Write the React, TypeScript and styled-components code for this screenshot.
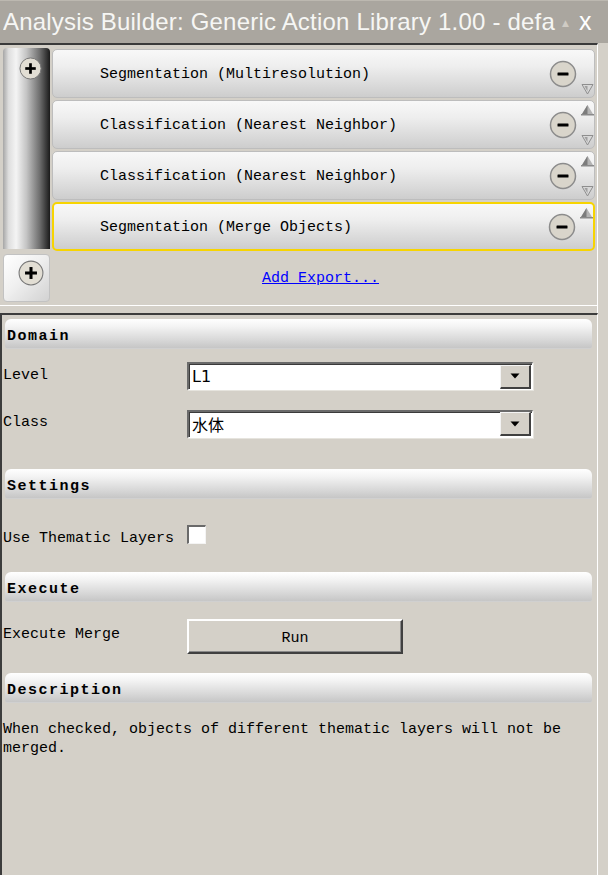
import React from "react";
import styled, { createGlobalStyle, css } from "styled-components";

const Global = createGlobalStyle`
  html, body { margin: 0; padding: 0; background: #d4d0c8; }
  body { width: 608px; height: 875px; overflow: hidden; }
  * { box-sizing: border-box; }
`;

const MONO = `"Liberation Mono", "Noto Sans CJK SC", monospace`;

const Window = styled.div`
  width: 608px;
  height: 875px;
  display: flex;
  flex-direction: column;
  background: #d4d0c8;
`;

const TitleBar = styled.div`
  height: 43px;
  flex: none;
  display: flex;
  align-items: center;
  background: #aaa69f;
  padding-left: 3px;
  border-top: 1px solid #bcb8b0;
`;

const TitleText = styled.div`
  flex: 1;
  overflow: hidden;
  white-space: nowrap;
  font-family: "Liberation Sans", Arial, sans-serif;
  font-size: 24px;
  letter-spacing: 0.2px;
  color: #f6f6f4;
  line-height: 40px;
`;

const TitleControls = styled.div`
  width: 52px;
  display: flex;
  align-items: center;
  gap: 10px;
  padding-left: 6px;
`;

const TitleArrow = styled.span`
  font-size: 9px;
  color: #cfcbc4;
  font-family: "DejaVu Sans", sans-serif;
  margin-top: 2px;
`;

const TitleClose = styled.span`
  font-family: "Liberation Sans", sans-serif;
  font-size: 25px;
  color: #ffffff;
  line-height: 24px;
  margin-top: -3px;
`;

const Body = styled.div`
  flex: 1;
  display: flex;
  flex-direction: column;
  width: 598px;
`;

const TopPanel = styled.div`
  flex: none;
  height: 263px;
  border-top: 2px solid #3a3a3a;
  border-right: 1px solid #ffffff;
  border-bottom: 1px solid #ffffff;
  padding: 3px 2px 3px 3px;
  display: grid;
  grid-template-columns: 47px 1fr;
  column-gap: 2px;
`;

const LeftColumn = styled.div`
  display: flex;
  flex-direction: column;
  gap: 5px;
`;

const SideBar = styled.div`
  height: 201px;
  border-radius: 4px 4px 0 0;
  background: linear-gradient(
    to right,
    #a6a6a6 0%,
    #dedede 12%,
    #f4f4f4 28%,
    #c4c4c4 50%,
    #6e6e6e 78%,
    #1a1a1a 100%
  );
  display: flex;
  justify-content: center;
  padding: 9px 0 0 8px;
`;

const SideButton = styled.div`
  height: 48px;
  border: 1px solid #c2c2c2;
  border-radius: 4px;
  background: linear-gradient(135deg, #ffffff 0%, #f0f0f0 45%, #d2d2d2 100%);
  display: flex;
  justify-content: center;
  padding: 5px 0 0 8px;
`;

const RowsColumn = styled.div`
  display: flex;
  flex-direction: column;
  gap: 2px;
  padding-top: 1px;
`;

const ActionRow = styled.div<{ $selected?: boolean }>`
  height: 49px;
  display: flex;
  align-items: center;
  border-radius: 5px;
  background: linear-gradient(to bottom, #f8f8f8 0%, #eeeeee 35%, #cdcdcd 100%);
  border: 1px solid #bdbdbd;
  padding-left: 47px;
  ${(p) =>
    p.$selected &&
    css`
      border: 2px solid #f7d400;
      padding-left: 46px;
    `}
`;

const ActionLabel = styled.div`
  flex: 1;
  font-family: ${MONO};
  font-size: 15px;
  color: #000;
  white-space: pre;
  padding-top: 2px;
`;

const RowControls = styled.div`
  display: flex;
  align-items: center;
  height: 100%;
  gap: 4px;
`;

const ArrowColumn = styled.div`
  height: 100%;
  width: 13px;
  display: flex;
  flex-direction: column;
  justify-content: space-between;
  padding: 1px 0 4px;
`;

const ArrowSlot = styled.div`
  width: 13px;
  height: 12px;
`;

const ExportRow = styled.div`
  flex: 1;
  display: flex;
  align-items: center;
  justify-content: center;
  padding-right: 6px;
  padding-top: 1px;
`;

const ExportLink = styled.a`
  font-family: ${MONO};
  font-size: 15px;
  color: #0000ff;
  text-decoration: underline;
  cursor: pointer;
`;

const Gutter = styled.div`
  height: 7px;
  flex: none;
  border-right: 1px solid #ffffff;
`;

const LowerPanel = styled.div`
  flex: 1;
  border-top: 2px solid #3c3c3c;
  border-left: 2px solid #3c3c3c;
  border-right: 1px solid #ffffff;
  padding: 4px 5px 0 0;
  display: flex;
  flex-direction: column;
`;

const SectionHeader = styled.div<{ $gap: number }>`
  height: 30px;
  margin: ${(p) => p.$gap}px 0 0 3px;
  border-radius: 6px 6px 3px 3px;
  background: linear-gradient(to bottom, #ffffff 0%, #f4f4f4 25%, #d6d6d6 75%, #c6c6c6 100%);
  border-bottom: 1px solid #d0d0d0;
  display: flex;
  align-items: center;
  padding: 5px 0 0 2px;
  font-family: ${MONO};
  font-weight: bold;
  font-size: 15px;
  letter-spacing: 1.5px;
  color: #000;
`;

const FieldRow = styled.div<{ $gap: number; $height: number }>`
  margin-top: ${(p) => p.$gap}px;
  height: ${(p) => p.$height}px;
  display: grid;
  grid-template-columns: 185px auto;
  align-items: center;
`;

const FieldLabel = styled.div<{ $shift: number }>`
  padding-left: 1px;
  font-family: ${MONO};
  font-size: 15px;
  line-height: 18px;
  color: #000;
  white-space: pre;
  transform: translateY(${(p) => p.$shift}px);
`;

const Combo = styled.div`
  width: 346px;
  height: 28px;
  display: flex;
  align-items: center;
  background: #ffffff;
  border-top: 2px solid #6a6a6a;
  border-left: 2px solid #6a6a6a;
  border-bottom: 1px solid #ffffff;
  border-right: 1px solid #ffffff;
  box-shadow: inset 1px 1px 0 #3a3a3a, 1px 1px 0 #e6e4de;
  padding: 0 1px 0 3px;
`;

const ComboText = styled.div`
  flex: 1;
  font-family: "DejaVu Sans", "Noto Sans CJK SC", sans-serif;
  font-size: 16px;
  color: #000;
`;

const ComboButton = styled.div`
  width: 31px;
  height: 24px;
  background: #d4d0c8;
  border-top: 1px solid #f4f4f4;
  border-left: 1px solid #f4f4f4;
  border-right: 2px solid #404040;
  border-bottom: 2px solid #404040;
  display: flex;
  align-items: center;
  justify-content: center;
`;

const CheckBox = styled.div`
  width: 19px;
  height: 19px;
  background: #ffffff;
  border-top: 2px solid #6a6a6a;
  border-left: 2px solid #6a6a6a;
  border-right: 1px solid #f4f4f4;
  border-bottom: 1px solid #f4f4f4;
`;

const RunButton = styled.button`
  width: 216px;
  height: 35px;
  background: #d4d0c8;
  border-top: 2px solid #ffffff;
  border-left: 2px solid #ffffff;
  border-right: 2px solid #404040;
  border-bottom: 2px solid #404040;
  box-shadow: inset -1px -1px 0 #8a8a8a;
  font-family: ${MONO};
  font-size: 15px;
  color: #000;
  padding: 3px 0 0;
`;

const Description = styled.div`
  margin-top: 17px;
  padding-left: 1px;
  font-family: ${MONO};
  font-size: 15px;
  line-height: 19px;
  color: #000;
  width: 590px;
`;

const PlusCircle = ({ size = 24 }: { size?: number }) => (
  <svg width={size} height={size} viewBox="0 0 24 24">
    <circle cx="12" cy="12" r="11" fill="#e2ded4" stroke="#777" strokeWidth="1" />
    <rect x="6.5" y="10.6" width="11" height="2.8" fill="#000" />
    <rect x="10.6" y="6.5" width="2.8" height="11" fill="#000" />
  </svg>
);

const MinusCircle = () => (
  <svg width="28" height="28" viewBox="0 0 28 28">
    <circle cx="14" cy="14" r="12.5" fill="#d9d5cb" stroke="#8c8c8c" strokeWidth="1.5" />
    <rect x="8.5" y="12.4" width="11" height="3.2" rx="0.5" fill="#000" />
  </svg>
);

const UpArrow = () => (
  <svg width="13" height="12" viewBox="0 0 13 12">
    <polygon points="6.5,1 12,10 1,10" fill="#b4b4b4" />
    <polygon points="6.5,1 6.5,10 1,10" fill="#7c7c7c" />
    <rect x="0" y="10" width="13" height="1.5" fill="#8a8a8a" />
  </svg>
);

const DownArrow = () => (
  <svg width="13" height="12" viewBox="0 0 13 12">
    <polygon points="1,1.5 12,1.5 6.5,11" fill="#d8d8d8" stroke="#8e8e8e" strokeWidth="1" />
    <polygon points="3.5,3 6.5,3 6.5,8.5" fill="#a0a0a0" />
  </svg>
);

const ComboArrow = () => (
  <svg width="10" height="6" viewBox="0 0 10 6">
    <polygon points="0.5,0.5 9.5,0.5 5,5.5" fill="#000" />
  </svg>
);

type Action = { name: string; up: boolean; down: boolean; selected?: boolean };

const actions: Action[] = [
  { name: "Segmentation (Multiresolution)", up: false, down: true },
  { name: "Classification (Nearest Neighbor)", up: true, down: true },
  { name: "Classification (Nearest Neighbor)", up: true, down: true },
  { name: "Segmentation (Merge Objects)", up: true, down: false, selected: true },
];

export default function App() {
  return (
    <>
      <Global />
      <Window>
        <TitleBar>
          <TitleText>Analysis Builder: Generic Action Library 1.00 - default</TitleText>
          <TitleControls>
            <TitleArrow>▲</TitleArrow>
            <TitleClose>x</TitleClose>
          </TitleControls>
        </TitleBar>
        <Body>
          <TopPanel>
            <LeftColumn>
              <SideBar>
                <PlusCircle size={23} />
              </SideBar>
              <SideButton>
                <PlusCircle size={26} />
              </SideButton>
            </LeftColumn>
            <RowsColumn>
              {actions.map((a, i) => (
                <ActionRow key={i} $selected={a.selected}>
                  <ActionLabel>{a.name}</ActionLabel>
                  <RowControls>
                    <MinusCircle />
                    <ArrowColumn>
                      <ArrowSlot>{a.up && <UpArrow />}</ArrowSlot>
                      <ArrowSlot>{a.down && <DownArrow />}</ArrowSlot>
                    </ArrowColumn>
                  </RowControls>
                </ActionRow>
              ))}
              <ExportRow>
                <ExportLink>Add Export...</ExportLink>
              </ExportRow>
            </RowsColumn>
          </TopPanel>
          <Gutter />
          <LowerPanel>
            <SectionHeader $gap={0}>Domain</SectionHeader>
            <FieldRow $gap={13} $height={28}>
              <FieldLabel $shift={0}>Level</FieldLabel>
              <Combo>
                <ComboText>L1</ComboText>
                <ComboButton>
                  <ComboArrow />
                </ComboButton>
              </Combo>
            </FieldRow>
            <FieldRow $gap={19} $height={29}>
              <FieldLabel $shift={-1}>Class</FieldLabel>
              <Combo>
                <ComboText>水体</ComboText>
                <ComboButton>
                  <ComboArrow />
                </ComboButton>
              </Combo>
            </FieldRow>
            <SectionHeader $gap={31}>Settings</SectionHeader>
            <FieldRow $gap={26} $height={19}>
              <FieldLabel $shift={4}>Use Thematic Layers</FieldLabel>
              <CheckBox />
            </FieldRow>
            <SectionHeader $gap={28}>Execute</SectionHeader>
            <FieldRow $gap={17} $height={35}>
              <FieldLabel $shift={-2}>Execute Merge</FieldLabel>
              <RunButton>Run</RunButton>
            </FieldRow>
            <SectionHeader $gap={19}>Description</SectionHeader>
            <Description>
              When checked, objects of different thematic layers will not be merged.
            </Description>
          </LowerPanel>
        </Body>
      </Window>
    </>
  );
}
